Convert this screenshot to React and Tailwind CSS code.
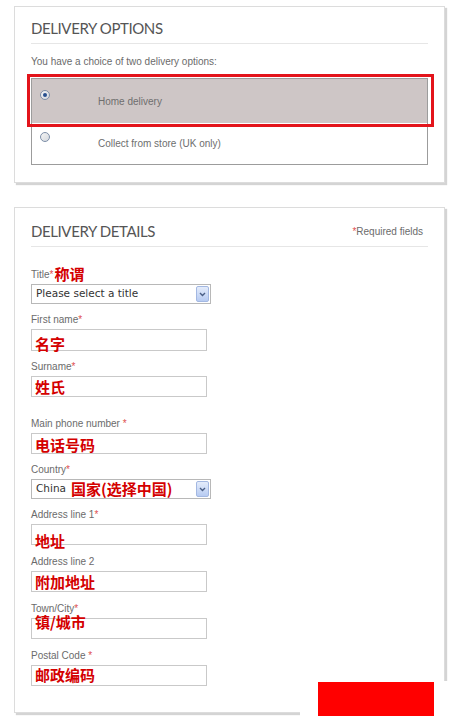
import React from 'react';

const label = "font-['Liberation_Sans',Arial,sans-serif] text-[10px] text-[#6b6b6b]";
const zh = "font-['Noto_Sans_CJK_SC',sans-serif] font-bold text-[#d40000] text-[15px] leading-[16px]";

const fields = [
  { name: 'First name', req: '*', zh: '名字', mt: 'mt-[9px]', h: 'h-[22px]', shift: 'translate-y-[4px]' },
  { name: 'Surname', req: '*', zh: '姓氏', mt: 'mt-[9px]', h: 'h-[21px]', shift: 'translate-y-0' },
  { name: 'Main phone number ', req: '*', zh: '电话号码', mt: 'mt-[20px]', h: 'h-[21px]', shift: 'translate-y-[1px]' },
  { name: 'Country', req: '*', select: true, mt: 'mt-[9px]' },
  { name: 'Address line 1', req: '*', zh: '地址', mt: 'mt-[9px]', h: 'h-[21px]', shift: 'translate-y-[6px]' },
  { name: 'Address line 2', req: '', zh: '附加地址', mt: 'mt-[10px]', h: 'h-[21px]', shift: 'translate-y-0' },
  { name: 'Town/City', req: '*', zh: '镇/城市', mt: 'mt-[10px]', h: 'h-[21px]', shift: 'translate-y-[-7px]' },
  { name: 'Postal Code ', req: '*', zh: '邮政编码', mt: 'mt-[10px]', h: 'h-[21px]', shift: 'translate-y-[-1px]' },
];

function Radio({ checked }) {
  return (
    <span className="flex h-[10px] w-[10px] items-center justify-center rounded-full border border-[#7d8fa8] bg-gradient-to-br from-[#f4f4f4] to-[#d4d8de]">
      {checked && <span className="h-[4px] w-[4px] rounded-full bg-[#28508f]" />}
    </span>
  );
}

function Select({ children }) {
  return (
    <div className="flex h-[20px] w-[180px] items-center justify-between border border-[#b8b8b8] bg-white pl-[4px] pr-[1px]">
      <span className="flex items-center font-['DejaVu_Sans',Verdana,sans-serif] text-[10.5px] text-[#333]">{children}</span>
      <span className="flex h-[16px] w-[13px] items-center justify-center rounded-[2px] border border-[#a3b8e2] bg-gradient-to-b from-[#e4ecfb] to-[#b7cbf2]">
        <svg width="7" height="5" viewBox="0 0 7 5">
          <path d="M1 1l2.5 2.5L6 1" fill="none" stroke="#4a5f86" strokeWidth="1.4" />
        </svg>
      </span>
    </div>
  );
}

function Heading({ children, right }) {
  return (
    <div className="flex items-center justify-between border-b border-[#e6e6e6] pb-[5px]">
      <h2 className="font-['Lato',sans-serif] text-[15px] leading-[20px] tracking-[-0.4px] text-[#555]">{children}</h2>
      {right}
    </div>
  );
}

export default function App() {
  return (
    <div className="relative h-[716px] w-[468px] overflow-hidden bg-white pt-[6px]">
      <section className="ml-[14px] h-[177px] w-[431px] border border-[#dcdcdc] px-[16px] pt-[11px] shadow-[2px_2px_1px_#d4d4d4]">
        <Heading>DELIVERY OPTIONS</Heading>
        <p className={`${label} mt-[11px] leading-[14px] text-[#5a5a5a]`}>You have a choice of two delivery options:</p>
        <div className="relative mt-[9px] border border-[#9c9c9c]">
          <div className="flex h-[44px] items-center bg-[#cec6c6]">
            <span className="ml-[8px] self-start pt-[11px]"><Radio checked /></span>
            <span className={`${label} ml-[48px] text-[#6e6e6e]`}>Home delivery</span>
          </div>
          <div className="flex h-[41px] items-center bg-white">
            <span className="ml-[8px] self-start pt-[9px]"><Radio /></span>
            <span className={`${label} ml-[48px] text-[#6e6e6e]`}>Collect from store (UK only)</span>
          </div>
          <div className="absolute left-[-5px] right-[-7px] top-[-5px] h-[53px] border-[3px] border-[#e3141b]" />
        </div>
      </section>

      <section className="ml-[14px] mt-[24px] h-[506px] w-[431px] border border-[#dcdcdc] px-[16px] pt-[13px] shadow-[2px_2px_1px_#d4d4d4]">
        <Heading right={<span className={`${label} pr-[5px]`}><span className="text-[#e05050]">*</span>Required fields</span>}>
          DELIVERY DETAILS
        </Heading>

        <div className="mt-[21px]">
          <div className={`${label} flex h-[12px] items-center`}>
            Title<span className="text-[#e05050]">*</span>
            <span className={`${zh} ml-[1px]`}>称谓</span>
          </div>
          <div className="mt-[4px]"><Select>Please select a title</Select></div>
        </div>

        {fields.map((f) => (
          <div key={f.name} className={f.mt}>
            <div className={`${label} flex h-[12px] items-center whitespace-pre`}>
              {f.name}<span className="text-[#e05050]">{f.req}</span>
            </div>
            <div className="mt-[4px]">
              {f.select ? (
                <Select>
                  China<span className={`${zh} ml-[5px]`}>国家(选择中国)</span>
                </Select>
              ) : (
                <div className={`${f.h} flex w-[176px] items-center border border-[#c9c9c9] bg-white pl-[3px]`}>
                  <span className={`${zh} ${f.shift}`}>{f.zh}</span>
                </div>
              )}
            </div>
          </div>
        ))}
      </section>

      <div className="absolute bottom-0 left-[300px] right-0 top-[681px] bg-white">
        <div className="ml-[18px] mt-[1px] h-full w-[116px] bg-[#ff0000]" />
      </div>
    </div>
  );
}
